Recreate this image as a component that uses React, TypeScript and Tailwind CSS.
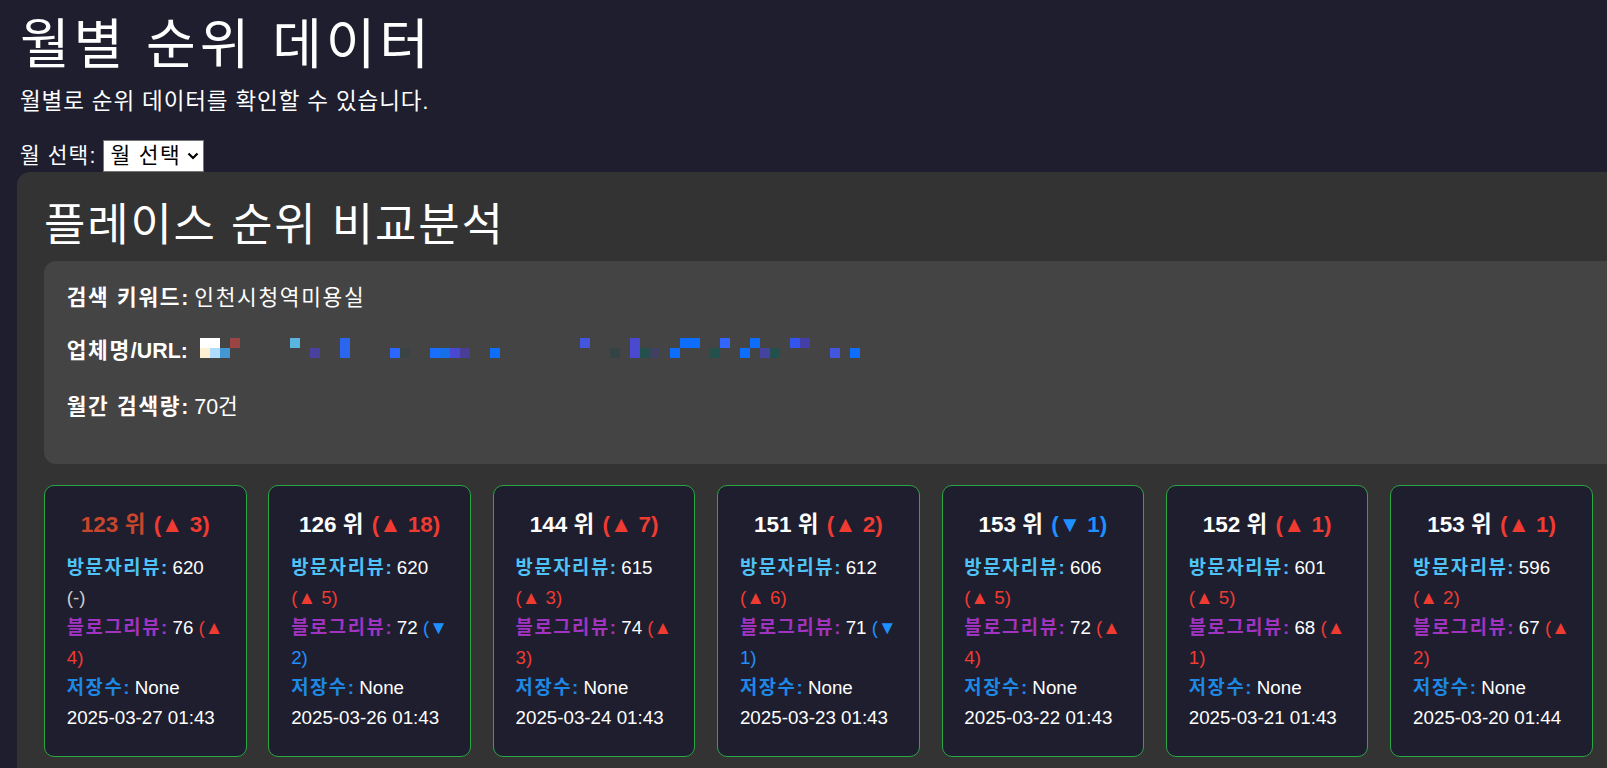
import React from 'react'

// 월별 순위 카드 데이터
type Delta = { dir: 'up' | 'down' | 'none'; n?: number }

type RankCard = {
  rank: number
  rankDelta: Delta
  visit: number
  visitDelta: Delta
  blog: number
  blogDelta: Delta
  saves: string
  at: string
  highlight?: boolean
}

const CARDS: RankCard[] = [
  { rank: 123, rankDelta: { dir: 'up', n: 3 }, visit: 620, visitDelta: { dir: 'none' }, blog: 76, blogDelta: { dir: 'up', n: 4 }, saves: 'None', at: '2025-03-27 01:43', highlight: true },
  { rank: 126, rankDelta: { dir: 'up', n: 18 }, visit: 620, visitDelta: { dir: 'up', n: 5 }, blog: 72, blogDelta: { dir: 'down', n: 2 }, saves: 'None', at: '2025-03-26 01:43' },
  { rank: 144, rankDelta: { dir: 'up', n: 7 }, visit: 615, visitDelta: { dir: 'up', n: 3 }, blog: 74, blogDelta: { dir: 'up', n: 3 }, saves: 'None', at: '2025-03-24 01:43' },
  { rank: 151, rankDelta: { dir: 'up', n: 2 }, visit: 612, visitDelta: { dir: 'up', n: 6 }, blog: 71, blogDelta: { dir: 'down', n: 1 }, saves: 'None', at: '2025-03-23 01:43' },
  { rank: 153, rankDelta: { dir: 'down', n: 1 }, visit: 606, visitDelta: { dir: 'up', n: 5 }, blog: 72, blogDelta: { dir: 'up', n: 4 }, saves: 'None', at: '2025-03-22 01:43' },
  { rank: 152, rankDelta: { dir: 'up', n: 1 }, visit: 601, visitDelta: { dir: 'up', n: 5 }, blog: 68, blogDelta: { dir: 'up', n: 1 }, saves: 'None', at: '2025-03-21 01:43' },
  { rank: 153, rankDelta: { dir: 'up', n: 1 }, visit: 596, visitDelta: { dir: 'up', n: 2 }, blog: 67, blogDelta: { dir: 'up', n: 2 }, saves: 'None', at: '2025-03-20 01:44' },
]

// 업체명/URL 모자이크 (x, row, color)
const MOSAIC: [number, number, string][] = [
  [200, 0, '#ffffff'], [210, 0, '#ffffff'], [230, 0, '#9b4444'], [290, 0, '#5ab4e0'], [340, 0, '#2a66ee'],
  [580, 0, '#4455e0'], [630, 0, '#4a4ad0'], [680, 0, '#0d6efd'], [690, 0, '#0d6efd'], [720, 0, '#3366ff'],
  [750, 0, '#0d6efd'], [790, 0, '#3355ee'], [800, 0, '#443fa8'],
  [200, 1, '#fff0d0'], [210, 1, '#b0dcff'], [220, 1, '#4496d0'], [310, 1, '#4a40a0'], [340, 1, '#2a66ee'],
  [390, 1, '#2a66ff'], [400, 1, '#3a4444'], [430, 1, '#1a6eff'], [440, 1, '#1570e8'], [450, 1, '#4a48d0'],
  [460, 1, '#483e98'], [490, 1, '#0d6efd'], [610, 1, '#344444'], [630, 1, '#4a4ad0'], [640, 1, '#23504a'],
  [650, 1, '#404060'], [670, 1, '#0d6efd'], [710, 1, '#23504a'], [740, 1, '#0d6efd'], [760, 1, '#4444a0'],
  [770, 1, '#23504a'], [830, 1, '#4455e0'], [850, 1, '#0d6efd'],
]

function DeltaText({ d }: { d: Delta }) {
  if (d.dir === 'none') return <span className="text-[#cccccc]">(-)</span>
  if (d.dir === 'up') return <span className="text-[#ef3b32]">(▲ {d.n})</span>
  return <span className="text-[#1e90ff]">(▼ {d.n})</span>
}

function Card({ c }: { c: RankCard }) {
  return (
    <div className="w-[202.5px] shrink-0 rounded-[10px] border border-[#28a745] bg-[#1e1e2e] px-[21.75px] pt-[24px] pb-[23px] text-[18.75px] leading-[30px] text-white">
      <div className="mb-[13px] text-center text-[22.5px] font-bold leading-[30px]">
        <span className={c.highlight ? 'text-[#c8472c]' : 'text-white'}>
          {c.rank} <span className="tracking-[2px]">위</span>
        </span>{' '}
        <DeltaText d={c.rankDelta} />
      </div>
      <p>
        <b className="text-[#4fc3f7]"><span className="tracking-[1.6px]">방문자리뷰</span>:</b> {c.visit}{' '}
        <DeltaText d={c.visitDelta} />
      </p>
      <p>
        <b className="text-[#a033c0]"><span className="tracking-[1.6px]">블로그리뷰</span>:</b> {c.blog}{' '}
        <DeltaText d={c.blogDelta} />
      </p>
      <p>
        <b className="text-[#1e88e5]"><span className="tracking-[1.6px]">저장수</span>:</b> {c.saves}
      </p>
      <p>{c.at}</p>
    </div>
  )
}

export default function App() {
  return (
    <div className="h-screen w-full overflow-hidden bg-[#1e1e2e] font-['Liberation_Sans','Noto_Sans_CJK_KR',sans-serif] text-white">
      <div className="px-[20px] pt-[17px]">
        <h1 className="text-[54px] font-normal leading-[56px] tracking-[3.9px]">월별 순위 데이터</h1>
        <p className="mt-[13.7px] text-[22.5px] leading-[30px] tracking-[0.87px]">
          월별로 순위 데이터를 확인할 수 있습니다.
        </p>
        <div className="mt-[23.3px] flex items-center gap-[7px] text-[21.4px]">
          <label htmlFor="month" className="tracking-[1.1px]">월 선택:</label>
          <div className="relative">
            <select
              id="month"
              className="h-[32px] w-[101px] appearance-none border border-[#767676] bg-white pl-[6px] text-[21.4px] leading-[30px] tracking-[1.4px] text-black"
            >
              <option>월 선택</option>
            </select>
            <svg className="pointer-events-none absolute right-[5px] top-[12px]" width="12" height="8" viewBox="0 0 12 8">
              <path d="M1.5 1.5 L6 6 L10.5 1.5" fill="none" stroke="#000" strokeWidth="2.2" />
            </svg>
          </div>
        </div>
      </div>

      <section className="ml-[17px] w-[1660px] rounded-[13px] bg-[#333333] px-[27px] pt-[27.7px] pb-[40px]">
        <h2 className="text-[45px] font-normal leading-[52px] tracking-[1.8px]">플레이스 순위 비교분석</h2>

        <div className="mt-[9.7px] rounded-[12px] bg-[#444444] px-[22.7px] pt-[20.6px] pb-[41.3px] text-[21.4px] leading-[32px]">
          <p>
            <b><span className="tracking-[1.7px]">검색 키워드</span>:</b>{' '}
            <span className="tracking-[1.7px]">인천시청역미용실</span>
          </p>
          <div className="mt-[20.5px] flex h-[32px] items-start">
            <b><span className="tracking-[1.7px]">업체명</span>/URL:</b>
            <svg className="ml-[12px] mt-[3px]" width="670" height="20" viewBox="200 338 670 20">
              {MOSAIC.map(([x, row, color], i) => (
                <rect key={i} x={x} y={338 + row * 10} width="10" height="10" fill={color} />
              ))}
            </svg>
          </div>
          <p className="mt-[24px]">
            <b><span className="tracking-[1.7px]">월간 검색량</span>:</b> 70<span className="tracking-[1.7px]">건</span>
          </p>
        </div>

        <div className="mt-[21px] flex gap-[21.9px]">
          {CARDS.map((c) => (
            <Card key={c.at} c={c} />
          ))}
        </div>
      </section>
    </div>
  )
}
